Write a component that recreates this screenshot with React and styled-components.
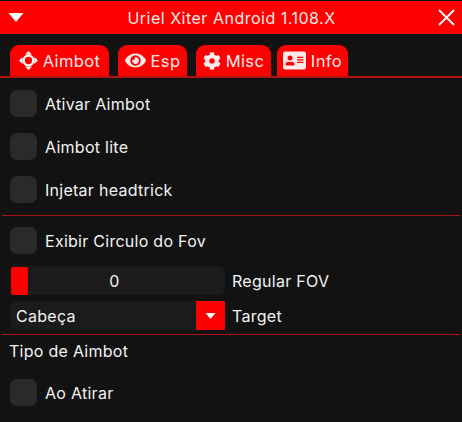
import React from "react";
import styled, { createGlobalStyle } from "styled-components";
import { FaEye, FaCog, FaAddressCard } from "react-icons/fa";

const Global = createGlobalStyle`
  html, body { margin: 0; padding: 0; background: #121212; }
  * { box-sizing: border-box; }
`;

const Window = styled.div`
  width: 462px;
  height: 422px;
  overflow: hidden;
  background: #121212;
  color: #f2f2f2;
  font-family: Inter, "Open Sans", sans-serif;
  font-size: 16px;
  letter-spacing: 0.27px;
  padding-top: 1px;
`;

const TitleBar = styled.header`
  height: 33px;
  background: #ff0000;
  display: flex;
  align-items: center;
  justify-content: space-between;
  padding: 0 7px;
  color: #ffe9e9;
`;

const Title = styled.span`
  font-size: 16px;
  letter-spacing: 0.5px;
`;

const Tabs = styled.nav`
  display: flex;
  gap: 9px;
  height: 44px;
  padding: 11px 0 0 10px;
  border-bottom: 2px solid #b01212;
`;

const Tab = styled.div`
  width: ${(p) => p.$w}px;
  margin-left: ${(p) => p.$ml || 0}px;
  height: 31px;
  background: #ff0000;
  border-radius: 9px 9px 0 0;
  display: flex;
  align-items: center;
  justify-content: center;
  gap: 5px;
  color: #ffeaea;
  font-size: 16.5px;
  letter-spacing: 0.4px;
`;

const Body = styled.main`
  padding: 4px 2px 0;
`;

const Row = styled.label`
  display: flex;
  align-items: center;
  gap: 8px;
  height: 43px;
  padding-left: 8px;
  margin-top: ${(p) => p.$mt || 0}px;
`;

const Check = styled.span`
  width: 27px;
  height: 27px;
  border-radius: 7px;
  background: #2a2a2a;
`;

const Sep = styled.div`
  height: 1px;
  margin: ${(p) => p.$m || "0"};
  background: #a81616;
`;

const Control = styled.div`
  display: flex;
  align-items: center;
  gap: 7px;
  height: 29px;
  padding-left: 8px;
  margin: ${(p) => p.$mt || 0}px 0 6px;
`;

const Track = styled.div`
  position: relative;
  width: 215px;
  height: 29px;
  border-radius: 7px;
  background: #1b1b1b;
  display: flex;
  align-items: center;
  justify-content: ${(p) => (p.$center ? "center" : "space-between")};
  padding: ${(p) => (p.$center ? "0 6px 0 0" : "0 0 0 6px")};
`;

const Thumb = styled.span`
  position: absolute;
  left: 1px;
  top: 1px;
  width: 17px;
  height: 28px;
  background: #ff0000;
  border-radius: 2px;
`;

const Arrow = styled.span`
  width: 29px;
  height: 29px;
  background: #ff0000;
  display: flex;
  align-items: center;
  justify-content: center;
`;

const Plain = styled.div`
  height: 32px;
  display: flex;
  align-items: center;
  padding-left: 7px;
`;

const Down = ({ w = 11, h = 6 }) => (
  <svg width={w} height={h} viewBox="0 0 10 6">
    <path d="M0 0h10L5 6z" fill="#fff" />
  </svg>
);

const AimIcon = () => (
  <svg width="19" height="19" viewBox="0 0 19 19" fill="#fff">
    <circle cx="9.5" cy="9.5" r="4.8" fill="none" stroke="#fff" strokeWidth="2.2" />
    <path d="M9.5 0l3.4 3.6H6.1zM9.5 19l3.4-3.6H6.1zM0 9.5l3.6-3.4v6.8zM19 9.5l-3.6-3.4v6.8z" />
  </svg>
);

export default function App() {
  return (
    <Window>
      <Global />
      <TitleBar>
        <Down w={18} h={9} />
        <Title>Uriel Xiter Android 1.108.X</Title>
        <svg width="17" height="17" viewBox="0 0 17 17">
          <path d="M1 1l15 15M16 1L1 16" stroke="#fff" strokeWidth="1.8" />
        </svg>
      </TitleBar>
      <Tabs>
        <Tab $w={99}><AimIcon />Aimbot</Tab>
        <Tab $w={69}><FaEye size={21} />Esp</Tab>
        <Tab $w={75}><FaCog size={18} />Misc</Tab>
        <Tab $w={71} $ml={-3}><FaAddressCard size={23} />Info</Tab>
      </Tabs>
      <Body>
        <Row><Check />Ativar Aimbot</Row>
        <Row><Check />Aimbot lite</Row>
        <Row><Check />Injetar headtrick</Row>
        <Sep $m="4px 0 3px" />
        <Row><Check />Exibir Circulo do Fov</Row>
        <Control $mt={4}>
          <Track $center><Thumb />0</Track>
          Regular FOV
        </Control>
        <Control>
          <Track>Cabeça<Arrow><Down /></Arrow></Track>
          Target
        </Control>
        <Sep $m="-2px 0 0" />
        <Plain>Tipo de Aimbot</Plain>
        <Row $mt={4}><Check />Ao Atirar</Row>
      </Body>
    </Window>
  );
}
